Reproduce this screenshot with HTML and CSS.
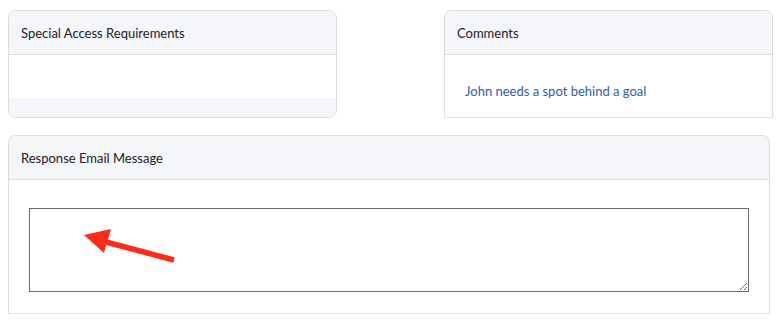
FILE: index.html
```html
<!DOCTYPE html>
<html lang="en">
<head>
    <meta charset="UTF-8">
    <meta name="viewport" content="width=device-width, initial-scale=1.0">
    <title>Registration Details</title>
    <link rel="stylesheet" href="styles.css">
</head>
<body>

    <div class="top-row">
        <div class="card card-access">
            <div class="card-header">Special Access Requirements</div>
            <div class="card-body"></div>
            <div class="card-footer"></div>
        </div>

        <div class="card card-open">
            <div class="card-header">Comments</div>
            <div class="card-body comment-body">
                <span class="comment-text">John needs a spot behind a goal</span>
            </div>
        </div>
    </div>

    <div class="card card-open card-wide">
        <div class="card-header">Response Email Message</div>
        <div class="card-body email-body">
            <textarea class="email-input"></textarea>
            <!-- annotation arrow -->
            <svg class="arrow" width="110" height="40" viewBox="0 0 110 40">
                <line x1="28" y1="14" x2="96" y2="32" stroke="#ff2a17" stroke-width="5.5"/>
                <polygon points="6,7 33,1 26,25" fill="#ff2a17"/>
            </svg>
        </div>
    </div>

</body>
</html>
```

FILE: styles.css
```css
body {
    margin: 0;
    padding: 10px 8px;
    font-family: Lato, "Open Sans", sans-serif;
    font-size: 13px;
    color: #222;
    background: #fff;
}
.top-row {
    display: flex;
    justify-content: space-between;
    width: 765px;
    margin-bottom: 17px;
}
.card {
    width: 329px;
    box-sizing: border-box;
    border: 1px solid #dcdde3;
    border-radius: 8px;
    overflow: hidden;
    background: #fff;
}
.card-open {
    border-bottom-color: #e2e2e2;
    border-bottom-left-radius: 0;
    border-bottom-right-radius: 0;
}
.card-header {
    height: 43px;
    display: flex;
    align-items: center;
    padding: 0 12px;
    background: #f5f6fa;
    border-bottom: 1px solid #dcdde3;
}
.card-access .card-body {
    height: 43px;
}
.card-footer {
    height: 19px;
    background: #f5f6fa;
}
.comment-body {
    height: 62px;
    display: flex;
    align-items: flex-end;
    padding: 0 20px;
}
.comment-text {
    color: #2f5eab;
    margin-bottom: 18px;
}
.card-wide {
    width: 762px;
}
.email-body {
    position: relative;
    padding: 28px 20px 21px;
}
.email-input {
    display: block;
    width: 100%;
    height: 84px;
    box-sizing: border-box;
    border: 1px solid #6a6a6a;
    border-radius: 0;
    margin: 0;
    font-family: inherit;
}
.arrow {
    position: absolute;
    left: 69px;
    top: 48px;
}
```
